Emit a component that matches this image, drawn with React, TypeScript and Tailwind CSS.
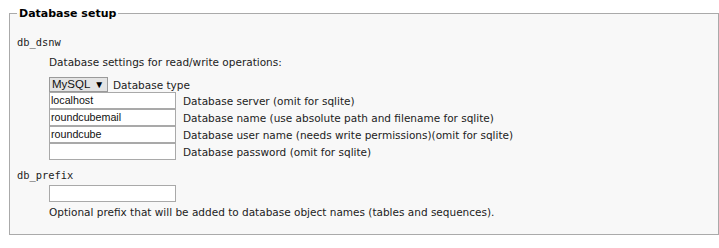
const sans = "font-['DejaVu_Sans',Verdana,sans-serif]";
const mono = "font-['DejaVu_Sans_Mono',monospace]";
const field = "font-['Liberation_Sans',Arial,sans-serif]";

const fields = [
  { value: 'localhost', label: 'Database server (omit for sqlite)' },
  { value: 'roundcubemail', label: 'Database name (use absolute path and filename for sqlite)' },
  { value: 'roundcube', label: 'Database user name (needs write permissions)(omit for sqlite)' },
  { value: '', label: 'Database password (omit for sqlite)' },
];

function TextBox({ value }: { value: string }) {
  return (
    <div
      className={`flex h-[17px] w-[127px] shrink-0 items-center border border-[#a9a9a9] bg-white pl-[1px] text-[10.7px] leading-none text-[#111] ${field}`}
    >
      {value}
    </div>
  );
}

export default function App() {
  return (
    <div className="bg-white pl-[9px] pt-[5px]">
      <fieldset className="border border-[#aaaaaa] bg-[#f8f8f8] pb-[15px] pl-[7px] text-[#222]">
        <legend className={`px-[2px] text-[11px] font-bold leading-[17px] text-black ${sans}`}>
          Database setup
        </legend>

        <div className={`mt-[13px] text-[10.4px] leading-[14px] ${mono}`}>db_dsnw</div>
        <div className={`pl-[32px] text-[10.5px] leading-[14px] ${sans}`}>
          <div className="mt-[6px]">Database settings for read/write operations:</div>
          <div className="mt-[8px] flex h-[15px] items-center">
            <div
              className={`flex h-[15px] w-[59px] items-center border border-[#9a9a9a] bg-[#e4e4e4] pl-[2px] text-[11.5px] leading-none text-[#111] ${field}`}
            >
              MySQL <span className="ml-[4px] text-[10px] text-black">▼</span>
            </div>
            <span className="ml-[5px]">Database type</span>
          </div>
          {fields.map((f) => (
            <div key={f.label} className="flex h-[17px] items-center">
              <TextBox value={f.value} />
              <span className="ml-[7px]">{f.label}</span>
            </div>
          ))}
        </div>

        <div className={`mt-[8px] text-[10.4px] leading-[14px] ${mono}`}>db_prefix</div>
        <div className={`pl-[32px] text-[10.5px] leading-[14px] ${sans}`}>
          <div className="mt-[3px]">
            <TextBox value="" />
          </div>
          <div className="mt-[3px]">
            Optional prefix that will be added to database object names (tables and sequences).
          </div>
        </div>
      </fieldset>
    </div>
  );
}
